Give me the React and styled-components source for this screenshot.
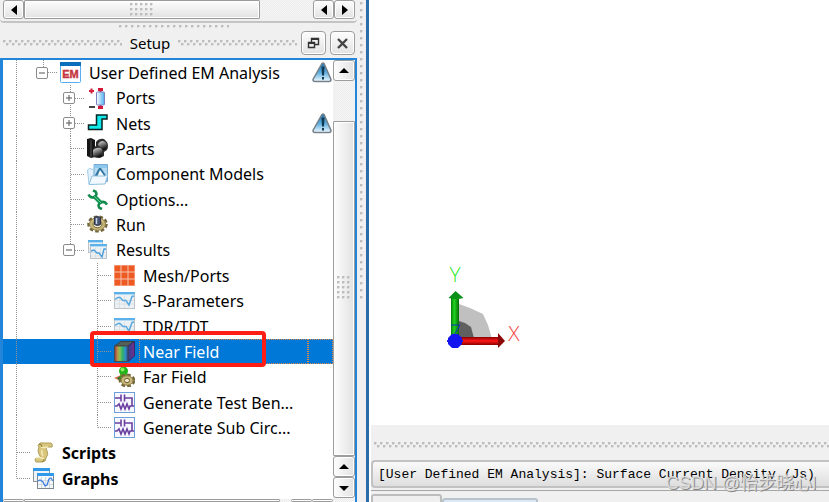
import React from 'react';
import styled, { createGlobalStyle, css } from 'styled-components';

const uiFont = '"Noto Sans", "Open Sans", sans-serif';
const blue = '#0078d7';
const borderGray = '#9c9c9c';
const dot = 'radial-gradient(circle at 1px 1px, #bdbdbd 1px, transparent 2px)';

const GlobalStyle = createGlobalStyle`
    * {
        box-sizing: border-box;
    }

    body {
        margin: 0;
        overflow: hidden;
        background: #f0f0f0;
        color: #000;
        font-family: ${uiFont};
        font-size: 16px;
    }

    button {
        padding: 0;
        font: inherit;
    }
`;

const Window = styled.div`
    position: relative;
    display: flex;
    height: 100vh;
    overflow: hidden;
`;

const Dock = styled.aside`
    display: flex;
    flex-direction: column;
    flex: 0 0 357px;
    min-width: 0;
`;

const raised = css`
    border: 1px solid ${borderGray};
    background: linear-gradient(${p => (p.$vertical ? '90deg' : '180deg')}, #fdfdfd, #e2e2e2);
    box-shadow: inset 0 0 0 1px #fff;
`;

const ScrollBar = styled.div`
    display: flex;
    flex-direction: ${p => (p.$vertical ? 'column' : 'row')};
    background: #f6f6f6 conic-gradient(#ececec 25%, transparent 0 50%, #ececec 0 75%, transparent 0) 0 0 / 2px 2px;
`;

const TopScroll = styled(ScrollBar)`
    height: 23px;
    padding: 0 2px 2px 3px;
    border-bottom: 2px solid #c4c4c4;
    border-radius: 0 0 4px 4px;
    background-clip: content-box;
`;

const SideScroll = styled(ScrollBar)`
    flex: 0 0 22px;
`;

const BottomScroll = styled(ScrollBar)`
    height: 3px;
    overflow: hidden;
`;

const ScrollButton = styled.button`
    ${raised}
    display: flex;
    align-items: center;
    justify-content: center;
    flex: 0 0 21px;
    border-radius: 3px;
`;

const Thumb = styled.div`
    ${raised}
    display: flex;
    align-items: center;
    justify-content: center;
    flex: ${p => p.$grow};
    border-radius: 1px;
`;

const ThumbGrip = styled.span`
    width: ${p => (p.$vertical ? 14 : 25)}px;
    height: ${p => (p.$vertical ? 25 : 14)}px;
    background: ${dot} 0 0 / 5px 5px;
`;

const Track = styled.div`
    flex: ${p => p.$grow};
`;

const Handle = styled.div`
    display: flex;
    justify-content: center;
    align-items: center;
    height: 7px;
    padding-right: 10px;
`;

const HandleDots = styled.span`
    width: 110px;
    height: 3px;
    background: ${dot} 0 0 / 6px 3px;
`;

const TitleBar = styled.header`
    display: flex;
    align-items: center;
    height: 28px;
    padding: 0 2px 2px 3px;
    gap: 4px;
`;

const Zigzag = styled.span`
    flex: 1;
    height: 6px;
    background: ${dot} 0 0 / 6px 6px repeat-x, ${dot} 3px 3px / 6px 6px repeat-x;
`;

const Title = styled.h1`
    margin: 0;
    padding: 0 4px;
    font-size: 15px;
    font-weight: 400;
    line-height: 24px;
`;

const TitleButton = styled.button`
    ${raised}
    display: flex;
    align-items: center;
    justify-content: center;
    width: 25px;
    height: 24px;
    border-radius: 4px;
`;

const TreePane = styled.section`
    display: flex;
    flex: 1;
    min-height: 0;
    border: solid #2385da;
    border-width: 2px 2px 0 3px;
    background: #fff;
`;

const TreeBody = styled.div`
    display: flex;
    flex-direction: column;
    flex: 1;
    min-width: 0;
`;

const Tree = styled.ul`
    display: grid;
    grid-auto-rows: 1fr;
    flex: 1;
    margin: 0;
    padding: 0 0 8px;
    list-style: none;
`;

const Row = styled.li`
    position: relative;
    display: flex;
    min-height: 0;
    line-height: 23px;
    font-weight: ${p => (p.$bold ? 700 : 400)};
    color: ${p => (p.$selected ? '#fff' : '#000')};
    background: ${p => (p.$selected ? blue : 'none')};
`;

const across = 'repeating-linear-gradient(90deg, #929292 0 1px, transparent 1px 2px)';
const down = 'repeating-linear-gradient(180deg, #929292 0 1px, transparent 1px 2px)';

const guides = {
    none: 'none',
    pass: `${down} 13px 0 / 1px 100% no-repeat`,
    tee: `${down} 13px 0 / 1px 100% no-repeat, ${across} 100% 50% / 13px 1px no-repeat`,
    end: `${down} 13px 0 / 1px 50% no-repeat, ${across} 100% 50% / 13px 1px no-repeat`,
};

const Guide = styled.span`
    display: flex;
    align-items: center;
    justify-content: center;
    flex: 0 0 27px;
    background: ${p => guides[p.$kind]};
`;

const Expander = styled.button`
    display: flex;
    align-items: center;
    justify-content: center;
    width: 12px;
    height: 12px;
    margin-right: 3px;
    border: 1px solid #8c8c8c;
    border-radius: 2px;
    background: #fff;
`;

const IconCell = styled.span`
    display: flex;
    align-items: center;
    flex: 0 0 28px;
    padding-left: 3px;
`;

const Label = styled.span`
    flex: 1;
    padding: 2px 0 0 4px;
    overflow: hidden;
    white-space: nowrap;
    outline: ${p => (p.$focus ? '1px dotted #d98a4a' : 'none')};
    outline-offset: -1px;
`;

const Status = styled.span`
    display: flex;
    align-items: center;
    flex: 0 0 25px;
    padding-left: 4px;
    outline: ${p => (p.$focus ? '1px dotted #d98a4a' : 'none')};
    outline-offset: -1px;
`;

const Highlight = styled.span`
    position: absolute;
    z-index: 1;
    top: -8px;
    left: 87px;
    width: 176px;
    height: 36px;
    border: 4px solid #ff1d14;
    border-radius: 4px;
`;

const Splitter = styled.div`
    display: flex;
    justify-content: center;
    flex: 0 0 12px;
    border-right: 3px solid #2b6ca8;
`;

const SplitterDots = styled.span`
    width: 4px;
    height: 303px;
    background: ${dot} 0 2px / 4px 7px;
`;

const Main = styled.main`
    display: flex;
    flex-direction: column;
    flex: 1;
    min-width: 0;
    background: #fff;
`;

const Viewport = styled.div`
    display: flex;
    align-items: flex-end;
    flex: 1;
    padding: 0 0 69px 71px;
`;

const Bottom = styled.div`
    display: flex;
    flex-direction: column;
    flex: 0 0 77px;
    margin-left: 2px;
    padding-top: 17px;
    overflow: hidden;
    background: #f0f0f0;
`;

const BottomGrip = styled(Zigzag)`
    flex: 0 0 6px;
    margin: 0 0 12px 3px;
`;

const PlotTitle = styled.h2`
    margin: 0;
    padding: 0 5px;
    height: 28px;
    border: 2px solid #c2c2c2;
    border-right: 0;
    border-radius: 4px 0 0 4px;
    background: linear-gradient(#fafafa, #dedede);
    font-family: "Liberation Mono", monospace;
    font-size: 13px;
    font-weight: 400;
    line-height: 25px;
    white-space: nowrap;
`;

const Tabs = styled.div`
    display: flex;
    align-items: flex-start;
    margin-top: 2px;
    padding-top: 3px;
    border-top: 1px solid #a6a6a6;
`;

const Tab = styled.button`
    width: ${p => (p.$active ? 71 : 96)}px;
    height: 28px;
    margin-top: ${p => (p.$active ? 0 : 4)}px;
    border: 2px solid ${p => (p.$active ? '#bdbdbd' : '#b9c3ce')};
    border-radius: 3px 3px 0 0;
    background: ${p => (p.$active ? '#efefef' : '#dce8f4')};
`;

const Watermark = styled.span`
    position: absolute;
    right: 13px;
    bottom: 7px;
    font-family: "Liberation Sans", "Noto Sans CJK SC", sans-serif;
    font-size: 18px;
    line-height: 24px;
    color: rgba(225, 225, 225, 0.9);
    text-shadow: 1px 1px 0 #8a8a8a;
`;

const Svg = ({ children, size = 21 }) => (
    <svg width={size} height={size} viewBox={`0 0 ${size} ${size}`} aria-hidden="true">{children}</svg>
);

const arrows = {
    left: 'M8 0v10L2 5z',
    right: 'M2 0v10l6-5z',
    up: 'M0 7h10L5 2z',
    down: 'M0 3h10L5 8z',
};

const Arrow = ({ dir }) => (
    <svg width="10" height="10" viewBox="0 0 10 10" aria-hidden="true"><path d={arrows[dir]} /></svg>
);

const EmIcon = () => (
    <Svg>
        <rect x="0.5" y="0.5" width="20" height="20" rx="1" fill="#fff" stroke="#58aef0" />
        <path d="M0 0h21v4H0z" fill="#0a70bd" />
        <text x="10.5" y="16" textAnchor="middle" fontFamily="Liberation Sans" fontWeight="700" fontSize="11" fill="#c5343c" stroke="#c5343c" strokeWidth="0.4">EM</text>
    </Svg>
);

const PortsIcon = () => (
    <Svg>
        <defs>
            <linearGradient id="port"><stop offset="0" stopColor="#fff" /><stop offset="1" stopColor="#4aaeee" /></linearGradient>
        </defs>
        <path d="M4.500 0.500v5M2 3h5" stroke="#d3223d" strokeWidth="2" />
        <path d="M2 19h6" stroke="#444" strokeWidth="2" />
        <path d="M13.500 1v19" stroke="#c01434" strokeWidth="2" />
        <path d="M11 0h5v3h-5zM11 18h5v3h-5z" fill="#d3163a" />
        <rect x="9.500" y="4" width="8" height="13" rx="1" fill="url(#port)" stroke="#7c7fc0" />
    </Svg>
);

const NetsIcon = () => (
    <Svg>
        <path d="M9.500 2h10.500v4h-5v10.500H1.500v-4.500h8z" fill="#10eaea" stroke="#062222" strokeWidth="1.500" />
    </Svg>
);

const PartsIcon = () => (
    <Svg>
        <defs>
            <linearGradient id="part" x1="0" y1="0" x2="0.4" y2="1"><stop offset="0" stopColor="#e2e2e2" /><stop offset="1" stopColor="#111" /></linearGradient>
        </defs>
        <path d="M0 1l4-1 4 2v17l-4 1-4-2z" fill="#151515" />
        <path d="M9 4q3-4 8-3l3 3q2 4 0 8l-3 2v4l-4 2-7-1V11q1-3 3-3z" fill="#2e2e2e" />
        <path d="M11 7q1-4 5-4 4 1 4 5t-4 4z" fill="url(#part)" />
        <path d="M6 12q5-4 9-1v7q-4 3-9 0z" fill="url(#part)" />
        <path d="M4 2v17" stroke="#555" />
    </Svg>
);

const ModelsIcon = () => (
    <Svg>
        <path d="M7 0.500h13.500v17H7z" fill="#b4daf2" stroke="#78aacf" />
        <path d="M7.500 1h12.500v3H7.500z" fill="#8cc7ee" />
        <path d="M7 13l5-9h2l6 9z" fill="#33769f" />
        <path d="M13 6l-3 7h8z" fill="#f5fbff" />
        <path d="M0.500 6l2-1.500 4 1V13L2 20z" fill="#e2f1fb" stroke="#a2cbe6" />
        <path d="M2 20.500L5 12h13l3-2-3 10z" fill="#f2f9fe" stroke="#8fbfe0" />
    </Svg>
);

const WrenchIcon = () => (
    <Svg>
        <path d="M7 7l7 7" stroke="#159553" strokeWidth="4" />
        <path d="M1.500 5.500q2 4 5.500 2.500q4-2 1.500-5.500L6 1.500" fill="none" stroke="#128a4c" strokeWidth="2.600" />
        <path d="M20 15.500q-2.500-4-6-2q-4 2-1.500 5.500l2.500 1" fill="none" stroke="#128a4c" strokeWidth="2.600" />
        <path d="M7 7l7 7" stroke="#5ecb95" strokeWidth="1" />
    </Svg>
);

const Gear = ({ cx, cy, r }) => (
    <g>
        <ellipse cx={cx} cy={cy} rx={r} ry={r * 0.8} fill="none" stroke="#75683c" strokeWidth="3.600" strokeDasharray="3.400 2" />
        <ellipse cx={cx} cy={cy} rx={r - 0.5} ry={r * 0.8 - 0.5} fill="#c9b87b" stroke="#8d7d48" />
        <ellipse cx={cx} cy={cy} rx={r - 4} ry={r * 0.8 - 3} fill="#f3ecd0" stroke="#6d5f31" />
    </g>
);

const RunIcon = () => (
    <Svg>
        <Gear cx={10.5} cy={10} r={8.5} />
        <path d="M7.500 3.500q3-2 6 0v7q-3 2-6 0z" fill="#48536f" stroke="#2c3346" />
        <path d="M9.500 4v6" stroke="#c8d4ea" strokeWidth="1.500" />
    </Svg>
);

const GraphFrame = ({ x, y, w, h, children }) => (
    <g transform={`translate(${x} ${y})`}>
        <rect x="0.500" y="0.500" width={w - 1} height={h - 1} fill="#eef1f3" stroke="#bcc4ca" />
        <path d={`M5.500 4v${h - 5}M10.500 4v${h - 5}M1 8.500h${w - 2}M1 12h${w - 2}`} stroke="#dbe1e5" />
        <path d={`M0 0h${w}v2H0z`} fill="#5db1ea" />
        <path d={`M1 2h${w - 2}v1H1z`} fill="#b5dcf5" />
        {children}
    </g>
);

const ResultsIcon = () => (
    <Svg>
        <GraphFrame x={1} y={0} w={15} h={13} />
        <GraphFrame x={3} y={4} w={17} h={15}>
            <path d="M1 7l3-1 3 3h2l3 4 2-8h2" fill="none" stroke="#4a9edb" strokeWidth="1.400" />
        </GraphFrame>
    </Svg>
);

const GraphIcon = () => (
    <Svg>
        <GraphFrame x={0} y={2} w={21} h={17}>
            <path d="M1 7.500l3-2h2l3 3h3l3 4.500 3-8.500 2-.5" fill="none" stroke="#58a9e0" strokeWidth="1.500" />
        </GraphFrame>
    </Svg>
);

const GraphsIcon = () => (
    <Svg>
        <rect x="0.500" y="0.500" width="16" height="13" fill="#f0f4f7" stroke="#8a949c" />
        <path d="M0 0h17v3H0z" fill="#3199ea" />
        <rect x="4.500" y="5.500" width="16" height="15" fill="#f5f8fa" stroke="#7c8791" />
        <path d="M8.500 9v11M12.500 9v11M16.500 9v11M5 12.500h15M5 16.500h15" stroke="#d3dae0" />
        <path d="M4 5h17v3H4z" fill="#3199ea" />
        <path d="M5 13l2-1 3 2 2 4 2-1 2-6 2-1 2 3" fill="none" stroke="#3b7fe0" strokeWidth="1.300" />
    </Svg>
);

const MeshIcon = () => (
    <Svg>
        <path d="M0 0h21v21H0z" fill="#f9c4ac" />
        {[0, 7, 14].map(y => [0, 7, 14].map(x => (
            <rect key={`${x}-${y}`} x={x + 0.5} y={y + 0.5} width="6" height="6" fill="#ee5a24" />
        )))}
    </Svg>
);

const NearIcon = () => (
    <Svg>
        <defs>
            <linearGradient id="near">
                <stop offset="0" stopColor="#8c3040" />
                <stop offset="0.2" stopColor="#c08a48" />
                <stop offset="0.4" stopColor="#86c452" />
                <stop offset="0.6" stopColor="#2fae6c" />
                <stop offset="0.8" stopColor="#3192c4" />
                <stop offset="1" stopColor="#2546a4" />
            </linearGradient>
            <linearGradient id="nearSide"><stop offset="0" stopColor="#2d3f9c" /><stop offset="1" stopColor="#7a2f86" /></linearGradient>
        </defs>
        <path d="M0.500 5L7 0.500h13.500L14 5z" fill="#55605a" stroke="#3c3f3f" />
        <path d="M14 5l6.500-4.500V15L14 20.500z" fill="url(#nearSide)" stroke="#2f2a68" />
        <path d="M0.500 5H14v15.500H0.500z" fill="url(#near)" stroke="#4b4a45" />
    </Svg>
);

const FarIcon = () => (
    <Svg>
        <path d="M0 12l7-3v6z" fill="#e46a58" />
        <path d="M3 12l5-3 2 6-4 1z" fill="#2c7f28" />
        <circle cx="9.500" cy="5" r="4.500" fill="#25b41e" />
        <circle cx="8.500" cy="3.500" r="2" fill="#8cf05c" />
        <path d="M6 8h7l2 5-8 1z" fill="#56a020" />
        <Gear cx={13} cy={14.5} r={6.5} />
    </Svg>
);

const CircuitIcon = () => (
    <Svg>
        <rect x="0.500" y="0.500" width="20" height="20" fill="#f6f7ff" stroke="#6f9fd8" />
        <path d="M1 6h6M7 2.500v7M10.500 2.500v7M10.500 6H18v8" fill="none" stroke="#6b3fa0" strokeWidth="1.600" />
        <path d="M1 14h2l2-2 2 5 2-5 2 5 2-5 2 5 1-3h4" fill="none" stroke="#6b3fa0" strokeWidth="1.600" />
    </Svg>
);

const ScriptIcon = () => (
    <Svg>
        <path d="M6 2q2-2 4-1h8q2 1 1 4h-4q-3 1-1 4t-1 7q0 4-4 4H3q-2-2 0-4h4q1-1-1-4t0-7q-2-1 0-3z" fill="#d8c67c" stroke="#b09e5c" />
        <path d="M8 5q3 1 7 0M9 8q-1 3 1 6M3 16q4-1 8 1" fill="none" stroke="#f3e9b8" strokeWidth="1.600" />
        <path d="M6 2q3 0 3 3M11 17q0 2-2 3" fill="none" stroke="#8c7a3a" />
    </Svg>
);

const WarningIcon = () => (
    <Svg>
        <defs>
            <linearGradient id="warn" x1="0" y1="0" x2="0" y2="1">
                <stop offset="0" stopColor="#1976b5" />
                <stop offset="0.5" stopColor="#59ace0" />
                <stop offset="1" stopColor="#f2fbff" />
            </linearGradient>
        </defs>
        <path d="M10 1.500q1-1 2 0l7 16q0 2-2 2H3q-2 0-2-2z" fill="url(#warn)" stroke="#77818a" strokeWidth="1.500" />
        <path d="M9.500 4.500h3l-.5 9h-2zM10 15h2v2.500h-2z" fill="#12384f" />
    </Svg>
);

const rows = [
    { label: 'User Defined EM Analysis', icon: EmIcon, guides: ['pass', 'end'], open: true, warn: true },
    { label: 'Ports', icon: PortsIcon, guides: ['pass', 'none', 'tee'], open: false },
    { label: 'Nets', icon: NetsIcon, guides: ['pass', 'none', 'tee'], open: false, warn: true },
    { label: 'Parts', icon: PartsIcon, guides: ['pass', 'none', 'tee'] },
    { label: 'Component Models', icon: ModelsIcon, guides: ['pass', 'none', 'tee'] },
    { label: 'Options...', icon: WrenchIcon, guides: ['pass', 'none', 'tee'] },
    { label: 'Run', icon: RunIcon, guides: ['pass', 'none', 'tee'] },
    { label: 'Results', icon: ResultsIcon, guides: ['pass', 'none', 'end'], open: true },
    { label: 'Mesh/Ports', icon: MeshIcon, guides: ['pass', 'none', 'none', 'tee'] },
    { label: 'S-Parameters', icon: GraphIcon, guides: ['pass', 'none', 'none', 'tee'] },
    { label: 'TDR/TDT', icon: GraphIcon, guides: ['pass', 'none', 'none', 'tee'] },
    { label: 'Near Field', icon: NearIcon, guides: ['pass', 'none', 'none', 'tee'], selected: true },
    { label: 'Far Field', icon: FarIcon, guides: ['pass', 'none', 'none', 'tee'] },
    { label: 'Generate Test Ben...', icon: CircuitIcon, guides: ['pass', 'none', 'none', 'tee'] },
    { label: 'Generate Sub Circ...', icon: CircuitIcon, guides: ['pass', 'none', 'none', 'end'] },
    { label: 'Scripts', icon: ScriptIcon, guides: ['tee'], bold: true },
    { label: 'Graphs', icon: GraphsIcon, guides: ['end'], bold: true },
];

const TreeRow = ({ row }) => {
    const Icon = row.icon;
    const last = row.guides.length - 1;

    return (
        <Row role="treeitem" aria-selected={!!row.selected} $bold={row.bold} $selected={row.selected}>
            {row.guides.map((kind, i) => (
                <Guide key={i} $kind={kind}>
                    {i === last && row.open !== undefined && (
                        <Expander aria-label={`Toggle ${row.label}`}>
                            <Svg size={10}>
                                <path d={row.open ? 'M2 5h6' : 'M2 5h6M5 2v6'} stroke="#555" />
                            </Svg>
                        </Expander>
                    )}
                </Guide>
            ))}
            <IconCell><Icon /></IconCell>
            <Label $focus={row.selected}>{row.label}</Label>
            <Status $focus={row.selected}>{row.warn && <WarningIcon />}</Status>
            {row.selected && <Highlight />}
        </Row>
    );
};

const Axes = () => (
    <svg width="84" height="96" viewBox="440 260 84 96" role="img" aria-label="X and Y axes">
        <defs>
            <linearGradient id="axisY"><stop offset="0" stopColor="#067a06" /><stop offset="0.4" stopColor="#21d321" /><stop offset="1" stopColor="#056b05" /></linearGradient>
            <linearGradient id="axisX" x1="0" y1="0" x2="0" y2="1"><stop offset="0" stopColor="#8a0000" /><stop offset="0.5" stopColor="#ff1616" /><stop offset="1" stopColor="#860000" /></linearGradient>
        </defs>
        <path d="M459 304l11 4 13 6 5 11 4 14h-33z" fill="#c0c0c0" />
        <path d="M459 321l6 2 6 4 3 11h-15z" fill="#606060" />
        <rect x="451" y="297" width="8" height="42" fill="url(#axisY)" />
        <path d="M455.500 291l8 7q-7 2-15 0z" fill="#0b8f18" />
        <rect x="459" y="337" width="39" height="8" fill="url(#axisX)" />
        <path d="M498 333l7 8-7 7z" fill="#8a0808" />
        <path d="M451 325h9l-6 10" fill="none" stroke="#1730c9" />
        <path d="M447 341h16" stroke="#1a1ad0" strokeWidth="2" />
        <path d="M452 334h6l4 4v6l-4 4h-6l-4-4v-6z" fill="#1414f0" />
        <text x="455" y="282" textAnchor="middle" fontFamily="Open Sans" fontWeight="300" fontSize="21" fill="#35e835">Y</text>
        <text x="514" y="341" textAnchor="middle" fontFamily="Open Sans" fontWeight="300" fontSize="21" fill="#f54545">X</text>
    </svg>
);

export default () => (
    <Window>
        <GlobalStyle />
        <Dock>
            <TopScroll>
                <ScrollButton aria-label="Scroll left"><Arrow dir="left" /></ScrollButton>
                <Thumb $grow={235}><ThumbGrip /></Thumb>
                <Track $grow={53} />
                <ScrollButton aria-label="Scroll left"><Arrow dir="left" /></ScrollButton>
                <ScrollButton aria-label="Scroll right"><Arrow dir="right" /></ScrollButton>
            </TopScroll>
            <Handle><HandleDots /></Handle>
            <TitleBar>
                <Zigzag />
                <Title>Setup</Title>
                <Zigzag />
                <TitleButton aria-label="Float">
                    <Svg size={13}>
                        <path d="M4.500 5V1.500h7v6H8M1.500 5.500h6v5h-6z" fill="none" stroke="#333" strokeWidth="1.400" />
                        <path d="M4 2h8M1 6h7" stroke="#333" strokeWidth="2" />
                    </Svg>
                </TitleButton>
                <TitleButton aria-label="Close">
                    <Svg size={13}><path d="M2 2l9 9M11 2l-9 9" stroke="#444" strokeWidth="2.400" /></Svg>
                </TitleButton>
            </TitleBar>
            <TreePane>
                <TreeBody>
                    <Tree role="tree" aria-label="Setup">
                        {rows.map(row => <TreeRow key={row.label} row={row} />)}
                    </Tree>
                    <BottomScroll>
                        <ScrollButton aria-label="Scroll left" />
                        <Thumb $grow={256} />
                        <Track $grow={11} />
                        <ScrollButton aria-label="Scroll left" />
                        <ScrollButton aria-label="Scroll right" />
                    </BottomScroll>
                </TreeBody>
                <SideScroll $vertical>
                    <ScrollButton $vertical aria-label="Scroll up"><Arrow dir="up" /></ScrollButton>
                    <Track $grow={40} />
                    <Thumb $vertical $grow={334}><ThumbGrip $vertical /></Thumb>
                    <ScrollButton $vertical aria-label="Scroll up"><Arrow dir="up" /></ScrollButton>
                    <ScrollButton $vertical aria-label="Scroll down"><Arrow dir="down" /></ScrollButton>
                    <Track $grow={4} />
                </SideScroll>
            </TreePane>
        </Dock>
        <Splitter><SplitterDots /></Splitter>
        <Main>
            <Viewport><Axes /></Viewport>
            <Bottom>
                <BottomGrip />
                <PlotTitle>[User Defined EM Analysis]: Surface Current Density (Js)</PlotTitle>
                <Tabs>
                    <Tab $active aria-label="Plot" />
                    <Tab aria-label="Table" />
                </Tabs>
            </Bottom>
        </Main>
        <Watermark>CSDN @怡步晓心l</Watermark>
    </Window>
);
